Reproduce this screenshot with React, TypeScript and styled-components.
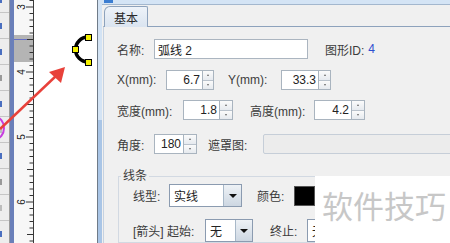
import styled, { createGlobalStyle } from "styled-components";

const GlobalStyle = createGlobalStyle`
  html, body {
    margin: 0;
    padding: 0;
    background: #fff;
  }
  body {
    font-family: "Liberation Sans", "Noto Sans CJK SC", sans-serif;
    font-size: 12px;
    color: #3a3a3a;
  }
`;

const Screen = styled.div`
  position: relative;
  display: flex;
  width: 450px;
  height: 243px;
  overflow: hidden;
  background: #fff;
`;

const ToolStrip = styled.div`
  flex: 0 0 9px;
  display: flex;
  flex-direction: column;
  margin-top: -13px;
  background: #ededed;
  border-right: 1px solid #9c9c9c;
`;

const ToolCell = styled.div`
  flex: 0 0 26px;
  box-sizing: border-box;
  display: flex;
  align-items: center;
  border-bottom: 1px solid #c6c6c6;
`;

const Glyph = styled.div<{ $c: string }>`
  width: 2px;
  height: 6px;
  background: ${(p) => p.$c};
`;

const BlueRail = styled.div`
  flex: 0 0 4px;
  background: #6a7fb9;
`;

const RulerBox = styled.div`
  flex: 0 0 19px;
  background: #f7f7f7;
  border-right: 1px solid #3a3a3a;
`;

const Canvas = styled.div`
  flex: 0 0 63px;
  background: #fff;
`;

const Dialog = styled.div`
  flex: 1;
  min-width: 0;
  display: flex;
  border-left: 1px solid #6f7b88;
`;

const Frame = styled.div`
  flex: 0 0 4px;
  background: linear-gradient(to bottom, #d3e3f4 0, #d3e3f4 120px, #a9c5e6 120px);
`;

const Main = styled.div`
  flex: 1;
  min-width: 0;
  display: flex;
  flex-direction: column;
`;

const TitleBar = styled.div`
  height: 7px;
  background: #d4e4f5;
  border-bottom: 1px solid #a3b7ce;
  padding-left: 2px;
`;

const TitleIcon = styled.div`
  width: 9px;
  height: 3px;
  background: #3b7dd1;
`;

const Body = styled.div`
  flex: 1;
  display: flex;
  flex-direction: column;
  background: #f0f0f0;
`;

const TabStrip = styled.div`
  height: 21px;
  display: flex;
  align-items: flex-start;
  padding-left: 2px;
`;

const Tab = styled.div`
  position: relative;
  z-index: 1;
  box-sizing: border-box;
  width: 44px;
  height: 21px;
  margin-top: 1px;
  display: flex;
  align-items: center;
  justify-content: center;
  border: 1px solid #8da2bc;
  border-bottom: none;
  border-top-left-radius: 6px;
  border-top-right-radius: 2px;
  background: linear-gradient(#eef3f9, #dae4f0);
  color: #2a2a2a;
`;

const Pane = styled.div`
  flex: 1;
  display: flex;
  flex-direction: column;
  margin-left: 1px;
  border-top: 1px solid #8da2bc;
  border-left: 1px solid #c5d2e1;
  padding: 12px 0 0 13px;
`;

const Row = styled.div<{ $h?: number; $mt?: number }>`
  display: flex;
  align-items: center;
  height: ${(p) => p.$h ?? 20}px;
  margin-top: ${(p) => p.$mt ?? 0}px;
  white-space: nowrap;
`;

const Label = styled.span<{ $w?: number; $ml?: number }>`
  flex: 0 0 ${(p) => (p.$w ? `${p.$w}px` : "auto")};
  margin-left: ${(p) => p.$ml ?? 0}px;
  color: #3c3c3c;
`;

const IdValue = styled.span`
  margin-left: 4px;
  color: #2e4fcf;
`;

const TextField = styled.div`
  flex: 0 0 154px;
  box-sizing: border-box;
  height: 20px;
  padding-left: 3px;
  display: flex;
  align-items: center;
  border: 1px solid #abb5c0;
  background: #fff;
  color: #222;
`;

const DisabledField = styled.div`
  flex: 0 0 220px;
  box-sizing: border-box;
  height: 20px;
  border: 1px solid #c6ced8;
  border-radius: 2px;
  background: #ececec;
`;

const Spin = styled.div`
  display: flex;
  height: 20px;
`;

const SpinInput = styled.div<{ $w: number }>`
  flex: 0 0 ${(p) => p.$w}px;
  box-sizing: border-box;
  padding-right: 2px;
  display: flex;
  align-items: center;
  justify-content: flex-end;
  border: 1px solid #a9b4bf;
  background: #fff;
  color: #222;
`;

const SpinButtons = styled.div<{ $w: number }>`
  flex: 0 0 ${(p) => p.$w}px;
  box-sizing: border-box;
  display: flex;
  flex-direction: column;
  border: 1px solid #a9b4bf;
  border-left: none;
`;

const SpinHalf = styled.div<{ $down?: boolean }>`
  flex: 1;
  display: flex;
  align-items: center;
  justify-content: center;
  background: linear-gradient(#fbfbfb, #e6eaef);
  border-top: ${(p) => (p.$down ? "1px solid #b9c2cc" : "none")};
`;

const TinyArrow = styled.div<{ $down?: boolean }>`
  width: 0;
  height: 0;
  border-left: 1.5px solid transparent;
  border-right: 1.5px solid transparent;
  ${(p) => (p.$down ? "border-top: 2px solid #666;" : "border-bottom: 2px solid #666;")}
`;

const GroupBox = styled.fieldset`
  margin: 15px 0 0 1px;
  padding: 0;
  border: 1px solid #d2d9e2;
  min-inline-size: 0;
`;

const Legend = styled.legend`
  margin-left: 2px;
  padding: 0 2px;
  line-height: 14px;
  color: #3c3c3c;
`;

const GroupInner = styled.div`
  padding-left: 14px;
  display: flex;
  flex-direction: column;
`;

const Combo = styled.div<{ $w: number }>`
  flex: 0 0 ${(p) => p.$w}px;
  box-sizing: border-box;
  height: 23px;
  display: flex;
  border: 1px solid #8b9bb0;
  background: #fff;
`;

const ComboText = styled.div`
  flex: 1;
  padding-left: 4px;
  display: flex;
  align-items: center;
  color: #222;
`;

const ComboArrow = styled.div<{ $w: number }>`
  flex: 0 0 ${(p) => p.$w}px;
  display: flex;
  align-items: center;
  justify-content: center;
  border-left: 1px solid #a8b8c8;
  background: linear-gradient(#eef2f6, #cdd7e2);

  &::after {
    content: "";
    border-left: 4px solid transparent;
    border-right: 4px solid transparent;
    border-top: 4px solid #111;
  }
`;

const Swatch = styled.div`
  flex: 0 0 21px;
  height: 20px;
  box-sizing: border-box;
  background: #000;
  border: 1px solid #555;
`;

const Overlay = styled.svg`
  position: absolute;
  left: 0;
  top: 0;
  pointer-events: none;
  z-index: 2;
`;

const Watermark = styled.div`
  position: absolute;
  left: 315px;
  top: 176px;
  right: 0;
  bottom: 0;
  z-index: 3;
  box-sizing: border-box;
  padding: 13px 0 0 7px;
  background: #fff;
  font-family: "Noto Sans CJK SC", sans-serif;
  font-size: 31px;
  line-height: 31px;
  color: #c7c7c7;
  white-space: nowrap;
`;

const toolGlyphs = ["#4a6fc0", "#4a6fc0", "#4a6fc0", "#9a9a9a", "#4a6fc0", "#bcbcbc", "#4a6fc0", "#9a9a9a", "#bcbcbc", "#4a6fc0"];

const Ruler = () => {
  const ticks = [];
  for (let i = -12; i <= 30; i++) {
    const y = 72 + i * 6.5;
    if (y < -2 || y > 245) continue;
    const major = i % 10 === 0;
    const half = !major && Math.abs(i % 10) === 5;
    const x1 = major ? 12 : half ? 13 : 15.5;
    ticks.push(<line key={i} x1={x1} x2={19} y1={y} y2={y} stroke="#333" strokeWidth={1} />);
  }
  const nums = [3, 4, 5, 6];
  return (
    <svg width={19} height={243}>
      <rect x={0} y={35} width={19} height={27} fill="#b4b4b4" />
      <line x1={0} x2={14} y1={39.5} y2={39.5} stroke="#6670c4" strokeWidth={1} />
      {ticks}
      {nums.map((n) => {
        const y = 72 + (n - 4) * 65;
        return (
          <text
            key={n}
            x={0}
            y={0}
            transform={`translate(11 ${y}) rotate(-90)`}
            textAnchor="middle"
            fontSize={10}
            fontFamily="Liberation Sans, sans-serif"
            fill="#222"
          >
            {n}
          </text>
        );
      })}
    </svg>
  );
};

const ArcShape = () => (
  <svg width={63} height={243}>
    <path d="M54 37 A12.5 12.5 0 0 0 54 62" fill="none" stroke="#000" strokeWidth={3.5} />
    <rect x={51.5} y={34.5} width={6} height={6} fill="#f4f000" stroke="#000" strokeWidth={1} />
    <rect x={38.5} y={46.5} width={6} height={6} fill="#f4f000" stroke="#000" strokeWidth={1} />
    <rect x={51.5} y={59.5} width={6} height={6} fill="#f4f000" stroke="#000" strokeWidth={1} />
  </svg>
);

const Spinner = ({ value, w, bw }: { value: string; w: number; bw: number }) => (
  <Spin>
    <SpinInput $w={w}>{value}</SpinInput>
    <SpinButtons $w={bw}>
      <SpinHalf>
        <TinyArrow />
      </SpinHalf>
      <SpinHalf $down>
        <TinyArrow $down />
      </SpinHalf>
    </SpinButtons>
  </Spin>
);

export default function App() {
  return (
    <>
      <GlobalStyle />
      <Screen>
        <ToolStrip>
          {toolGlyphs.map((c, i) => (
            <ToolCell key={i}>
              <Glyph $c={c} />
            </ToolCell>
          ))}
        </ToolStrip>
        <BlueRail />
        <RulerBox>
          <Ruler />
        </RulerBox>
        <Canvas>
          <ArcShape />
        </Canvas>
        <Dialog>
          <Frame />
          <Main>
            <TitleBar>
              <TitleIcon />
            </TitleBar>
            <Body>
              <TabStrip>
                <Tab>基本</Tab>
              </TabStrip>
              <Pane>
                <Row>
                  <Label $w={37}>名称:</Label>
                  <TextField>弧线 2</TextField>
                  <Label $ml={17}>图形ID:</Label>
                  <IdValue>4</IdValue>
                </Row>
                <Row $mt={11}>
                  <Label $w={49}>X(mm):</Label>
                  <Spinner value="6.7" w={37} bw={11} />
                  <Label $w={53} $ml={14}>Y(mm):</Label>
                  <Spinner value="33.3" w={38} bw={12} />
                </Row>
                <Row $mt={10}>
                  <Label $w={66}>宽度(mm):</Label>
                  <Spinner value="1.8" w={37} bw={13} />
                  <Label $w={64} $ml={17}>高度(mm):</Label>
                  <Spinner value="4.2" w={38} bw={13} />
                </Row>
                <Row $mt={14}>
                  <Label $w={37}>角度:</Label>
                  <Spinner value="180" w={30} bw={13} />
                  <Label $w={55} $ml={11}>遮罩图:</Label>
                  <DisabledField />
                </Row>
                <GroupBox>
                  <Legend>线条</Legend>
                  <GroupInner>
                    <Row $h={23} $mt={1}>
                      <Label $w={36}>线型:</Label>
                      <Combo $w={73}>
                        <ComboText>实线</ComboText>
                        <ComboArrow $w={17} />
                      </Combo>
                      <Label $w={37} $ml={15}>颜色:</Label>
                      <Swatch />
                    </Row>
                    <Row $h={23} $mt={12}>
                      <Label $w={72}>[箭头] 起始:</Label>
                      <Combo $w={48}>
                        <ComboText>无</ComboText>
                        <ComboArrow $w={16} />
                      </Combo>
                      <Label $w={37} $ml={17}>终止:</Label>
                      <Combo $w={60}>
                        <ComboText>无</ComboText>
                        <ComboArrow $w={16} />
                      </Combo>
                    </Row>
                  </GroupInner>
                </GroupBox>
              </Pane>
            </Body>
          </Main>
        </Dialog>
        <Overlay width={450} height={243}>
          <ellipse cx={-5} cy={128} rx={9} ry={11} fill="none" stroke="#c63ee0" strokeWidth={2} />
          <line x1={0} y1={129} x2={57} y2={75} stroke="#e8413a" strokeWidth={2.5} />
          <polygon points="65,67 49,72 61,83" fill="#e8413a" />
        </Overlay>
        <Watermark>软件技巧</Watermark>
      </Screen>
    </>
  );
}
